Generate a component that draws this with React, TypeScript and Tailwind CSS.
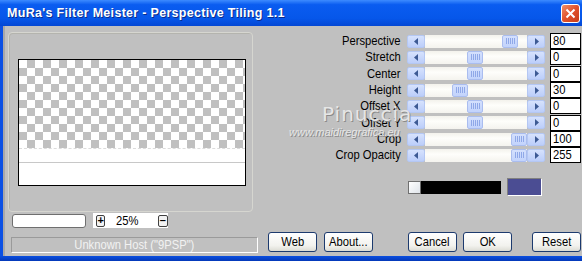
import React from "react";

const rows = [
  { label: "Perspective", value: "80", thumb: 77 },
  { label: "Stretch", value: "0", thumb: 42 },
  { label: "Center", value: "0", thumb: 42 },
  { label: "Height", value: "30", thumb: 27 },
  { label: "Offset X", value: "0", thumb: 42 },
  { label: "Offset Y", value: "0", thumb: 42 },
  { label: "Crop", value: "100", thumb: 86 },
  { label: "Crop Opacity", value: "255", thumb: 86 },
];

// no narrow face installed, so squeeze the regular one
const Narrow = ({ children, origin = "origin-center" }: { children: React.ReactNode; origin?: string }) => (
  <span className={`inline-block scale-x-[0.83] whitespace-nowrap ${origin}`}>{children}</span>
);

const ArrowButton = ({ dir }: { dir: "left" | "right" }) => (
  <div className="flex h-[13px] w-[18px] shrink-0 items-center justify-center rounded-[2px] border border-[#b4c7f3] bg-[linear-gradient(#d6e2fd,#bccefa)]">
    <svg width="5" height="7" viewBox="0 0 5 7">
      {dir === "left" ? (
        <path d="M4 0 L0 3.5 L4 7 Z" fill="#3d5a94" />
      ) : (
        <path d="M1 0 L5 3.5 L1 7 Z" fill="#3d5a94" />
      )}
    </svg>
  </div>
);

const Slider = ({ thumb }: { thumb: number }) => (
  <div className="flex h-[13px] w-[138px] items-center">
    <ArrowButton dir="left" />
    <div className="relative h-[13px] flex-1 bg-[linear-gradient(#f3f2ec,#fefefb_40%,#f4f3ee)]">
      <div
        className="absolute top-0 flex h-[13px] w-[16px] items-center justify-center gap-[1px] rounded-[2px] border border-[#aabdef] bg-[linear-gradient(#d4e0fd,#c2d3fc)]"
        style={{ left: thumb }}
      >
        {[0, 1, 2, 3, 4].map((i) => (
          <div key={i} className="h-[6px] w-[1px] bg-[#8fa8e8]" />
        ))}
      </div>
    </div>
    <ArrowButton dir="right" />
  </div>
);

const XpButton = ({ label }: { label: string }) => (
  <button className="h-[20px] w-[49px] shrink-0 rounded-[3px] border border-[#1c3a6e] bg-[linear-gradient(#ffffff,#f2f2ee_70%,#dcdcd4)] text-[13.5px] leading-none text-black">
    <Narrow>{label}</Narrow>
  </button>
);

const App = () => {
  return (
    <div className="relative h-[261px] w-[582px] overflow-hidden bg-[#c0c0c0] [font-family:'Liberation_Sans',sans-serif]">
      {/* title bar */}
      <div className="flex h-[26px] items-center justify-between bg-[linear-gradient(#3d8bff,#0a5cf0_18%,#0657ea_70%,#0347d4)] pl-[7px] pr-[2px]">
        <span className="text-[12.5px] font-bold tracking-[0.3px] text-white [text-shadow:1px_1px_0_#0a2c8c]">
          MuRa's Filter Meister - Perspective Tiling 1.1
        </span>
        <div className="flex h-[19px] w-[19px] items-center justify-center rounded-[3px] border border-white bg-[linear-gradient(135deg,#f0906a,#e0512b_50%,#c83c18)]">
          <svg width="11" height="11" viewBox="0 0 11 11">
            <path d="M1.5 1.5 L9.5 9.5 M9.5 1.5 L1.5 9.5" stroke="white" strokeWidth="2" />
          </svg>
        </div>
      </div>

      <div className="flex h-[230px] border-l-[3px] border-[#0b50e4]">
        {/* left column */}
        <div className="flex w-[259px] flex-col pl-[5px] pt-[6px] shadow-[inset_2px_0_0_#a8a8a8]">
          <div className="h-[180px] w-[245px] rounded-[4px] border border-[#d6d6d0] pl-[9px] pt-[26px] shadow-[inset_1px_1px_0_#b4b4ae]">
            <div className="flex h-[127px] w-[228px] flex-col border border-black bg-white">
              <div className="h-[88px] w-[226px] bg-[conic-gradient(#c0c0c0_25%,#fff_0_50%,#c0c0c0_0_75%,#fff_0)] bg-[length:16px_16px]" />
              <div className="h-[1px] w-[226px] border-t border-dashed border-[#dcdcdc]" />
              <div className="h-[13px]" />
              <div className="h-[1px] bg-[#c8c8c8]" />
            </div>
          </div>

          <div className="mt-[1px] flex h-[15px] items-center pl-[4px]">
            <div className="h-[14px] w-[74px] rounded-[3px] border border-[#6f6f6f] bg-white" />
            <div className="ml-[7px] flex h-[15px] w-[75px] items-center bg-white pl-[3px]">
              <div className="flex h-[12px] w-[10px] items-center justify-center rounded-[2px] border border-[#404040] bg-[#f2f2f2] text-[11px] font-bold leading-none">
                +
              </div>
              <span className="ml-[11px] w-[34px] text-[13.5px] leading-none">
                <Narrow origin="origin-left">25%</Narrow>
              </span>
              <div className="ml-[10px] flex h-[12px] w-[11px] items-center justify-center rounded-[2px] border border-[#404040] bg-[#f2f2f2] text-[11px] font-bold leading-none">
                –
              </div>
            </div>
          </div>

          <div className="ml-[3px] mt-[9px] flex h-[16px] w-[247px] items-center justify-center border border-t-[#9a9a9a] border-l-[#9a9a9a] border-b-white border-r-white text-[13.5px] leading-none text-[#f2f2f2]">
            <Narrow>Unknown Host ("9PSP")</Narrow>
          </div>
        </div>

        {/* right column */}
        <div className="flex flex-1 flex-col pt-[7px]">
          {rows.map((r, i) => (
            <div key={r.label} className={`flex items-center ${i % 3 === 2 ? "h-[17px]" : "h-[16px]"}`}>
              <span className="w-[139px] text-right text-[13.5px] leading-none text-black">
                <Narrow origin="origin-right">{r.label}</Narrow>
              </span>
              <div className="ml-[6px]">
                <Slider thumb={r.thumb} />
              </div>
              <div className="ml-[5px] flex h-[16px] w-[31px] items-center border border-black bg-white pl-[2px] text-[13.5px] leading-none">
                <Narrow origin="origin-left">{r.value}</Narrow>
              </div>
            </div>
          ))}

          <div className="mt-[15px] flex h-[18px] items-center pl-[146px]">
            <div className="h-[13px] w-[13px] border border-[#707070] bg-[linear-gradient(135deg,#ffffff,#dfe4ea)]" />
            <div className="h-[13px] w-[80px] bg-black" />
            <div className="ml-[6px] h-[18px] w-[35px] border border-t-[#808080] border-l-[#808080] border-b-white border-r-white bg-[#4b4d93]" />
          </div>

          <div className="mt-[36px] flex items-center pl-[6px]">
            <XpButton label="Web" />
            <div className="w-[7px]" />
            <XpButton label="About..." />
            <div className="w-[35px]" />
            <XpButton label="Cancel" />
            <div className="w-[6px]" />
            <XpButton label="OK" />
            <div className="w-[20px]" />
            <XpButton label="Reset" />
          </div>
        </div>
      </div>

      <div className="h-[5px] bg-[linear-gradient(#0a4fe0,#0538b8)]" />

      {/* watermark */}
      <div className="pointer-events-none absolute left-[289px] top-[104px] text-[#e6e6e6] [text-shadow:1px_1px_0_#8a8a8a]">
        <div className="ml-[33px] text-[20px] leading-none tracking-[1px] [font-family:'DejaVu_Sans',sans-serif]">
          Pinuccia
        </div>
        <div className="mt-[3px] text-[11px] italic leading-none">www.maidiregrafica.eu</div>
      </div>
    </div>
  );
};

export default App;
